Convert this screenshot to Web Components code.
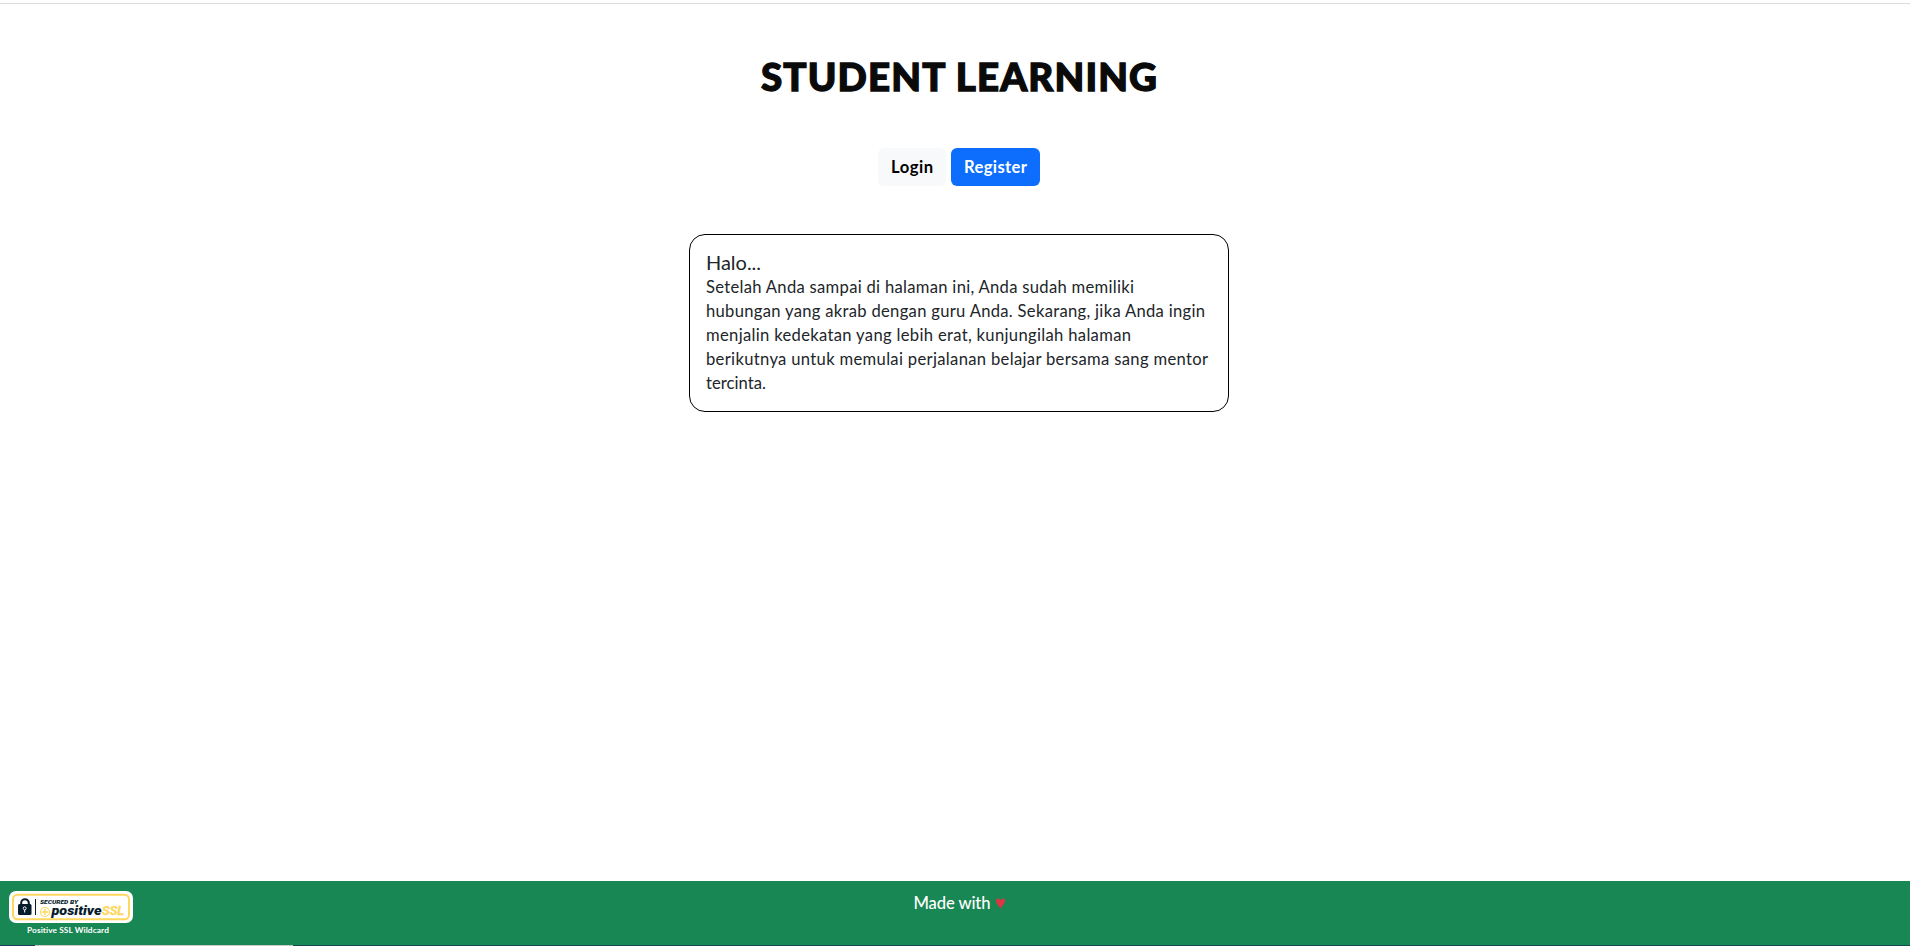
<!DOCTYPE html>
<html lang="id">
<head>
<meta charset="utf-8">
<title>Student Learning</title>
<style>
html,body{margin:0;height:100%;overflow:hidden;background:#fff}
body{font-family:Lato,"Open Sans",sans-serif;color:#212529;font-size:16.6px;line-height:24px}
</style>
</head>
<body>
<learning-page></learning-page>
<script>
/* One line of text, tracked so that it fills the given width. */
class FitLine extends HTMLElement{
  connectedCallback(){
    const r=this.attachShadow({mode:'open'});
    r.innerHTML='<style>:host{display:block;white-space:nowrap;width:var(--w)}span{display:block;width:max-content}</style><span><slot></slot></span>';
    const w=+this.getAttribute('w');
    this.style.setProperty('--w',w+'px');
    const s=r.querySelector('span'),n=this.textContent.length;
    s.style.letterSpacing=((w-s.getBoundingClientRect().width)/(n-1))+'px';
  }
}
class PageTitle extends HTMLElement{
  connectedCallback(){
    this.attachShadow({mode:'open'}).innerHTML=`<style>
:host{display:flex;justify-content:center;padding-top:48px}
h1{margin:0 0 4px;font-size:38.5px;line-height:48px;font-weight:900;color:#0a0a0a;-webkit-text-stroke:1.3px #0a0a0a}</style>
<h1><fit-line w="396">STUDENT LEARNING</fit-line></h1>`;
  }
}
class ActionButton extends HTMLElement{
  connectedCallback(){
    this.attachShadow({mode:'open'}).innerHTML=`<style>
:host{display:flex;box-sizing:border-box;height:38px;padding:7px 13px;border-radius:6px;background:#f8f9fa;color:#000;font-weight:700}
:host([primary]){background:#0d6efd;color:#fff}</style><slot></slot>`;
  }
}
class InfoCard extends HTMLElement{
  connectedCallback(){
    this.attachShadow({mode:'open'}).innerHTML=`<style>
:host{display:block;box-sizing:border-box;width:540px;height:178px;padding:15px 16px 16px;border:1px solid #000;border-radius:16px}
.head{font-size:20px;margin-bottom:1px}</style>
<div class="head"><fit-line w="55">Halo...</fit-line></div><div><slot></slot></div>`;
  }
}
class SslSeal extends HTMLElement{
  connectedCallback(){
    this.attachShadow({mode:'open'}).innerHTML=`<style>
:host{display:flex;flex-direction:column;align-items:center;width:124px;color:#fff;font-size:8.3px;line-height:12px;font-weight:700}
svg{display:block;margin-bottom:1px}
fit-line{margin-right:6px}</style>
<svg width="124" height="32" viewBox="0 0 124 32">
<rect width="124" height="32" rx="7" fill="#fff"/>
<rect x="4" y="3.7" width="116" height="24.6" rx="4.5" fill="none" stroke="#ffd75e" stroke-width="2"/>
<path d="M12.2 15v-3a3.8 3.8 0 0 1 7.600 0v3" fill="none" stroke="#051c2c" stroke-width="2"/>
<rect x="9" y="13" width="13.500" height="11" rx="1.500" fill="#051c2c"/>
<circle cx="15.700" cy="17.300" r="1.500" fill="none" stroke="#fff" stroke-width=".9"/><path d="M15.700 19v2.500" stroke="#fff"/>
<path d="M26.500 8v16" stroke="#051c2c"/>
<circle cx="36" cy="21" r="4.500" fill="none" stroke="#ffd75e" stroke-width="1.200"/><path d="M33 21h6M36 18v6" stroke="#ffd75e" stroke-width="1.500"/>
<g font-family="Roboto" font-style="italic" fill="#051c2c">
<text x="31" y="12.500" font-size="5.800" font-weight="900" textLength="38" lengthAdjust="spacingAndGlyphs">SECURED BY</text>
<text x="42.500" y="24.200" font-size="12" font-weight="900" textLength="50" lengthAdjust="spacingAndGlyphs">positive</text>
<text x="93" y="24.200" font-size="12" font-weight="700" fill="#ffd75e" stroke="#ffd75e" stroke-width=".3" textLength="22" lengthAdjust="spacingAndGlyphs">SSL</text></g></svg>
<fit-line w="82">Positive SSL Wildcard</fit-line>`;
  }
}
class PageFooter extends HTMLElement{
  connectedCallback(){
    this.attachShadow({mode:'open'}).innerHTML=`<style>
:host{display:grid;grid-template-columns:1fr auto 1fr;width:1918px;height:64px;background:#198754;color:#fff;align-items:start}
ssl-seal{margin:10px 0 0 9px}
.made{display:flex;gap:5px;padding-top:10px;font-weight:500}
svg{margin-top:7px}</style>
<ssl-seal></ssl-seal><div class="made"><fit-line w="77">Made with</fit-line><svg width="9" height="11" viewBox="0 0 9 11"><path d="M4.500 11C3.700 8 0 6 0 3 0-.3 3.700-.3 4.500 2.800 5.300-.3 9-.3 9 3c0 3-3.700 5-4.500 8Z" fill="#dc3545"/></svg></div>`;
  }
}
class LearningPage extends HTMLElement{
  connectedCallback(){
    this.attachShadow({mode:'open'}).innerHTML=`<style>
:host{display:flex;flex-direction:column;height:946px;width:1918px}
.rule{height:1px;margin-top:3px;background:#dcdcdc;flex:none}
main{flex:1;display:flex;flex-direction:column;align-items:center}
nav{display:flex;gap:5px;margin:44px 0 48px}
.edge{height:1px;background:linear-gradient(90deg,#203a60 35px,#c8c8c8 35px 293px,#174a50 293px)}</style>
<div class="rule"></div>
<main><page-title></page-title>
<nav><action-button><fit-line w="42">Login</fit-line></action-button><action-button primary><fit-line w="63">Register</fit-line></action-button></nav>
<info-card><fit-line w="428">Setelah Anda sampai di halaman ini, Anda sudah memiliki</fit-line><fit-line w="499">hubungan yang akrab dengan guru Anda. Sekarang, jika Anda ingin</fit-line><fit-line w="425">menjalin kedekatan yang lebih erat, kunjungilah halaman</fit-line><fit-line w="502">berikutnya untuk memulai perjalanan belajar bersama sang mentor</fit-line><fit-line w="60">tercinta.</fit-line></info-card>
</main>
<page-footer></page-footer><div class="edge"></div>`;
  }
}
customElements.define('learning-page',LearningPage);
customElements.define('page-title',PageTitle);
customElements.define('action-button',ActionButton);
customElements.define('info-card',InfoCard);
customElements.define('page-footer',PageFooter);
customElements.define('ssl-seal',SslSeal);
customElements.define('fit-line',FitLine);
</script>
</body>
</html>
